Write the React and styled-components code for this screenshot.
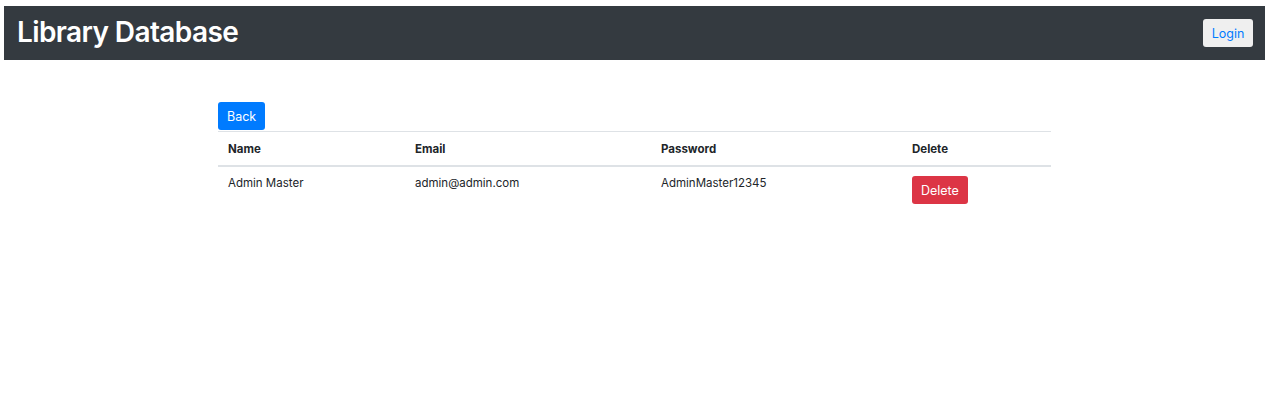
import React from "react";
import styled, { createGlobalStyle } from "styled-components";

const GlobalStyle = createGlobalStyle`
  body {
    margin: 0;
    background: #fff;
    font-family: Inter, "Liberation Sans", Arial, sans-serif;
    color: #212529;
  }
`;

const users = [
  { id: 1, name: "Admin Master", email: "admin@admin.com", password: "AdminMaster12345" },
];

const App = () => {
  return (
    <Page>
      <GlobalStyle />
      <NavBar>
        <Brand>Library Database</Brand>
        <LoginBtn>Login</LoginBtn>
      </NavBar>
      <Container>
        <Btn variant="primary">Back</Btn>
        <Table>
          <thead>
            <tr>
              <Th width={167}>Name</Th>
              <Th width={226}>Email</Th>
              <Th width={231}>Password</Th>
              <Th width={129}>Delete</Th>
            </tr>
          </thead>
          <tbody>
            {users.map((u) => (
              <tr key={u.id}>
                <Td>{u.name}</Td>
                <Td>{u.email}</Td>
                <Td>{u.password}</Td>
                <Td>
                  <Btn variant="danger">Delete</Btn>
                </Td>
              </tr>
            ))}
          </tbody>
        </Table>
      </Container>
    </Page>
  );
};

const Page = styled.div`
  padding: 6px 5px 0 4px;
`;

const NavBar = styled.nav`
  height: 54px;
  background: #343a40;
  display: flex;
  align-items: center;
  justify-content: space-between;
  padding: 0 12px 0 13px;
`;

const Brand = styled.div`
  color: #fff;
  font-size: 28px;
  font-weight: 600;
  letter-spacing: -0.6px;
  margin-top: -2px;
`;

const LoginBtn = styled.button`
  width: 50px;
  height: 28px;
  border: none;
  border-radius: 3px;
  background: #efefef;
  color: #007bff;
  font-family: inherit;
  font-size: 12.5px;
  padding: 0;
  cursor: pointer;
`;

const Container = styled.div`
  width: 833px;
  margin: 42px auto 0;
  display: flex;
  flex-direction: column;
  align-items: flex-start;
`;

const Btn = styled.button`
  height: 28px;
  padding: 0 9px;
  border: none;
  border-radius: 3px;
  background: ${(p) => (p.variant === "danger" ? "#dc3545" : "#007bff")};
  color: #fff;
  font-family: inherit;
  font-size: 12.5px;
  cursor: pointer;
`;

const Table = styled.table`
  width: 100%;
  margin-top: 1px;
  border-collapse: collapse;
  table-layout: fixed;
  font-size: 11.5px;
`;

const Th = styled.th`
  width: ${(p) => p.width}px;
  text-align: left;
  font-weight: 700;
  padding: 10px 10px 8px;
  line-height: 15px;
  border-top: 1px solid #dee2e6;
  border-bottom: 2px solid #dee2e6;
`;

const Td = styled.td`
  vertical-align: top;
  padding: 9px 10px;
  line-height: 15px;
`;

export default App;
